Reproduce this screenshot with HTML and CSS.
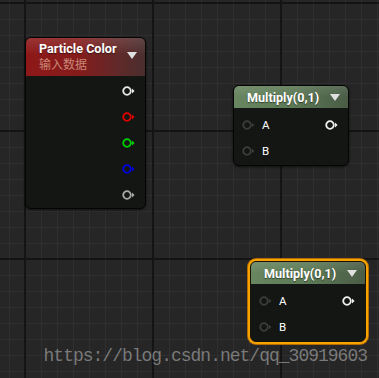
FILE: index.html
```html
<!DOCTYPE html>
<html lang="en">
<head>
    <meta charset="UTF-8">
    <title>Material Graph</title>
    <link rel="stylesheet" href="styles.css">
</head>
<body>

    <!-- Graph canvas -->
    <div class="canvas">

        <!-- Particle Color node -->
        <div class="node node-particle">
            <div class="node-header header-red">
                <div class="titles">
                    <span class="title">Particle Color</span>
                    <span class="subtitle">输入数据</span>
                </div>
                <span class="caret"></span>
            </div>
            <div class="node-body">
                <div class="pin-row out">
                    <svg class="pin" width="13" height="10" viewBox="0 0 13 10"><circle cx="5" cy="5" r="3.8" fill="none" stroke="#e8e8e8" stroke-width="1.8"/><path d="M10 2.6 L12.6 5 L10 7.4 Z" fill="#e8e8e8"/></svg>
                </div>
                <div class="pin-row out">
                    <svg class="pin" width="13" height="10" viewBox="0 0 13 10"><circle cx="5" cy="5" r="3.8" fill="none" stroke="#e00000" stroke-width="1.8"/><path d="M10 2.6 L12.6 5 L10 7.4 Z" fill="#e00000"/></svg>
                </div>
                <div class="pin-row out">
                    <svg class="pin" width="13" height="10" viewBox="0 0 13 10"><circle cx="5" cy="5" r="3.8" fill="none" stroke="#00d000" stroke-width="1.8"/><path d="M10 2.6 L12.6 5 L10 7.4 Z" fill="#00d000"/></svg>
                </div>
                <div class="pin-row out">
                    <svg class="pin" width="13" height="10" viewBox="0 0 13 10"><circle cx="5" cy="5" r="3.8" fill="none" stroke="#0000e0" stroke-width="1.8"/><path d="M10 2.6 L12.6 5 L10 7.4 Z" fill="#0000e0"/></svg>
                </div>
                <div class="pin-row out">
                    <svg class="pin" width="13" height="10" viewBox="0 0 13 10"><circle cx="5" cy="5" r="3.8" fill="none" stroke="#a8a8a8" stroke-width="1.8"/><path d="M10 2.6 L12.6 5 L10 7.4 Z" fill="#a8a8a8"/></svg>
                </div>
            </div>
        </div>

        <!-- Multiply node -->
        <div class="node node-mul">
            <div class="node-header header-green">
                <span class="title">Multiply(0,1)</span>
                <span class="caret"></span>
            </div>
            <div class="node-body">
                <div class="pin-row">
                    <svg class="pin" width="13" height="10" viewBox="0 0 13 10"><circle cx="5" cy="5" r="3.8" fill="none" stroke="#3c3c3c" stroke-width="1.8"/><path d="M10 2.8 L12.4 5 L10 7.2 Z" fill="#3c3c3c"/></svg>
                    <span class="pin-label">A</span>
                    <svg class="pin pin-out" width="13" height="10" viewBox="0 0 13 10"><circle cx="5" cy="5" r="3.8" fill="none" stroke="#f0f0f0" stroke-width="1.8"/><path d="M10 2.6 L12.6 5 L10 7.4 Z" fill="#f0f0f0"/></svg>
                </div>
                <div class="pin-row">
                    <svg class="pin" width="13" height="10" viewBox="0 0 13 10"><circle cx="5" cy="5" r="3.8" fill="none" stroke="#3c3c3c" stroke-width="1.8"/><path d="M10 2.8 L12.4 5 L10 7.2 Z" fill="#3c3c3c"/></svg>
                    <span class="pin-label">B</span>
                </div>
            </div>
        </div>

        <!-- Selected Multiply node -->
        <div class="node node-mul node-selected">
            <div class="node-header header-green">
                <span class="title">Multiply(0,1)</span>
                <span class="caret"></span>
            </div>
            <div class="node-body">
                <div class="pin-row">
                    <svg class="pin" width="13" height="10" viewBox="0 0 13 10"><circle cx="5" cy="5" r="3.8" fill="none" stroke="#3c3c3c" stroke-width="1.8"/><path d="M10 2.8 L12.4 5 L10 7.2 Z" fill="#3c3c3c"/></svg>
                    <span class="pin-label">A</span>
                    <svg class="pin pin-out" width="13" height="10" viewBox="0 0 13 10"><circle cx="5" cy="5" r="3.8" fill="none" stroke="#f0f0f0" stroke-width="1.8"/><path d="M10 2.6 L12.6 5 L10 7.4 Z" fill="#f0f0f0"/></svg>
                </div>
                <div class="pin-row">
                    <svg class="pin" width="13" height="10" viewBox="0 0 13 10"><circle cx="5" cy="5" r="3.8" fill="none" stroke="#3c3c3c" stroke-width="1.8"/><path d="M10 2.8 L12.4 5 L10 7.2 Z" fill="#3c3c3c"/></svg>
                    <span class="pin-label">B</span>
                </div>
            </div>
        </div>

        <div class="watermark">https://blog.csdn.net/qq_30919603</div>
    </div>

</body>
</html>
```

FILE: styles.css
```css
* {
    margin: 0;
    padding: 0;
    box-sizing: border-box;
}

body {
    font-family: Roboto, "Noto Sans CJK SC", sans-serif;
    background-color: #262626;
    overflow: hidden;
}

/* Graph canvas with grid */
.canvas {
    position: relative;
    width: 379px;
    height: 378px;
    background-color: #262626;
    background-image:
        linear-gradient(to right, #141414 0, #141414 2px, transparent 2px),
        linear-gradient(to bottom, #141414 0, #141414 2px, transparent 2px),
        linear-gradient(to right, #2f2f2f 0, #2f2f2f 1px, transparent 1px),
        linear-gradient(to bottom, #2f2f2f 0, #2f2f2f 1px, transparent 1px);
    background-size: 128px 128px, 128px 128px, 16px 16px, 16px 16px;
    background-position: 24px 2px, 24px 2px, 9px 3px, 9px 3px;
}

/* Nodes */
.node {
    position: absolute;
    background-color: #141614;
    border: 1px solid #050505;
    border-radius: 6px;
    box-shadow: 0 1px 3px rgba(0, 0, 0, 0.6);
    display: flex;
    flex-direction: column;
}

.node-particle {
    left: 25px;
    top: 37px;
    width: 121px;
    height: 172px;
}

.node-mul {
    left: 233px;
    top: 85px;
    width: 116px;
    height: 81px;
}

.node-selected {
    left: 250px;
    top: 261px;
    width: 116px;
    height: 81px;
    border-color: #1a1207;
    box-shadow: 0 0 0 2px #f4a300, 0 0 0 3px #b56a00;
}

.node-header {
    display: flex;
    justify-content: space-between;
    align-items: center;
    border-radius: 5px 5px 0 0;
    color: #fff;
    padding: 0 8px 0 9px;
}

.header-red {
    height: 39px;
    align-items: flex-start;
    padding-top: 2px;
    background:
        linear-gradient(to bottom, rgba(255, 255, 255, 0.12), rgba(255, 255, 255, 0) 45%),
        linear-gradient(to right, #8e1818 0%, #841c1c 45%, #5e2a2a 80%, #4a2e2e 100%);
}

.header-green {
    height: 22px;
    background:
        linear-gradient(to bottom, rgba(255, 255, 255, 0.1), rgba(255, 255, 255, 0) 50%),
        linear-gradient(to right, #688660 0%, #5d7a56 50%, #4a5c46 100%);
}

.titles {
    display: flex;
    flex-direction: column;
    padding-left: 4px;
}

.title {
    font-size: 12.6px;
    font-weight: bold;
    line-height: 17px;
    text-shadow: 0 1px 1px rgba(0, 0, 0, 0.5);
}

.header-green .title {
    padding-left: 4px;
}

.subtitle {
    font-size: 12px;
    line-height: 17px;
    color: #c98676;
}

.caret {
    width: 0;
    height: 0;
    border-left: 5px solid transparent;
    border-right: 5px solid transparent;
    border-top: 7px solid #e0e0e0;
}

.header-red .caret {
    margin-top: 12px;
}

/* Pins */
.node-body {
    display: flex;
    flex-direction: column;
    padding-top: 2px;
}

.node-mul .node-body {
    padding-top: 4px;
}

.pin-row {
    height: 26px;
    display: flex;
    align-items: center;
    padding: 0 10px 0 8px;
}

.pin-row.out {
    justify-content: flex-end;
}

.pin {
    display: block;
}

.pin-label {
    color: #fff;
    font-size: 11.5px;
    margin-left: 7px;
}

.pin-out {
    margin-left: auto;
}

/* Watermark */
.watermark {
    position: absolute;
    right: 12px;
    top: 346px;
    font-family: "Liberation Mono", monospace;
    font-size: 18px;
    letter-spacing: -1px;
    color: rgba(150, 150, 150, 0.75);
    white-space: nowrap;
}
```
